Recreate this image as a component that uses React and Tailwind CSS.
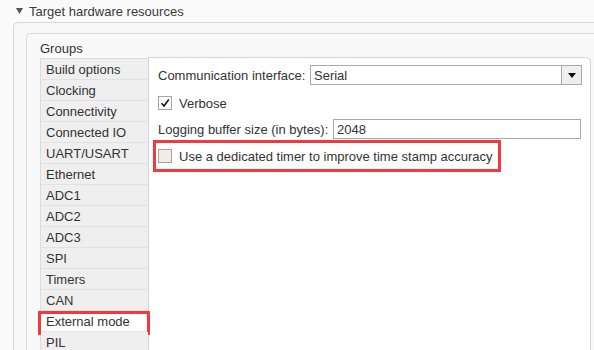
import React from 'react';

const groups = [
  'Build options',
  'Clocking',
  'Connectivity',
  'Connected IO',
  'UART/USART',
  'Ethernet',
  'ADC1',
  'ADC2',
  'ADC3',
  'SPI',
  'Timers',
  'CAN',
  'External mode',
  'PIL',
];

const Checkbox = ({ checked, tint }) => (
  <div
    className={`w-[14px] h-[14px] shrink-0 border border-[#a3a3a3] flex items-center justify-center ${
      tint ? 'bg-[#f1ece4]' : 'bg-white'
    }`}
  >
    {checked && (
      <svg width="10" height="10" viewBox="0 0 10 10">
        <path d="M1.5 5.2 L4 8 L8.8 1.5" fill="none" stroke="#111" strokeWidth="1.6" />
      </svg>
    )}
  </div>
);

const App = () => {
  return (
    <div className="w-[594px] h-[350px] overflow-hidden bg-[#fafafa] text-[#333] font-['Liberation_Sans',Arial,sans-serif] text-[13px] leading-none">
      {/* Section header */}
      <div className="h-[22px] flex items-center pl-[16px] gap-[6px]">
        <svg width="7" height="6" viewBox="0 0 7 6">
          <path d="M0 0 H7 L3.5 6 Z" fill="#555" />
        </svg>
        <span className="text-[13px] text-[#3a3a3a]">Target hardware resources</span>
      </div>

      {/* Outer panel */}
      <div className="ml-[13px] w-[640px] h-[400px] border-l border-t border-[#d8d8d8] rounded-tl-[5px] bg-[#f8f8f8] pt-[10px] pl-[12px]">
        {/* Inner panel */}
        <div className="h-[400px] border-l border-t border-[#dadada] rounded-tl-[5px] bg-[#f9f9f9] pl-[13px]">
          <div className="h-[24px] pt-[8px]">Groups</div>

          <div className="flex">
            {/* Group list */}
            <div className="w-[108px] shrink-0 border-l border-t border-[#dcdcdc]">
              {groups.map((g) => (
                <div
                  key={g}
                  className={`relative h-[21px] border-b border-[#e2e2e2] pl-[5px] flex items-center ${
                    g === 'External mode' ? 'bg-white' : 'bg-[#efefef]'
                  }`}
                >
                  {g}
                  {g === 'External mode' && (
                    <div className="absolute -left-[3px] top-[0px] w-[112px] h-[24px] border-[3px] border-[#f2393d]" />
                  )}
                </div>
              ))}
            </div>

            {/* Settings panel */}
            <div className="-mt-[1px] w-[443px] h-[320px] shrink-0 bg-white border-l border-t border-r border-[#d6d6d6] rounded-tr-[5px] pl-[9px] pt-[7px]">
              <div className="flex items-center h-[20px]">
                <span className="w-[152px] shrink-0">Communication interface:</span>
                <div className="w-[272px] h-[20px] border border-[#a9a9a9] flex">
                  <div className="flex-1 flex items-center pl-[3px]">Serial</div>
                  <div className="w-[20px] border-l border-[#a9a9a9] bg-[#efefef] flex items-center justify-center">
                    <svg width="8" height="5" viewBox="0 0 8 5">
                      <path d="M0 0 H8 L4 5 Z" fill="#111" />
                    </svg>
                  </div>
                </div>
              </div>

              <div className="flex items-center gap-[7px] mt-[11px] h-[14px]">
                <Checkbox checked />
                <span>Verbose</span>
              </div>

              <div className="flex items-center h-[20px] mt-[9px]">
                <span className="w-[175px] shrink-0">Logging buffer size (in bytes):</span>
                <div className="w-[248px] h-[20px] border border-[#a9a9a9] flex items-center pl-[3px]">2048</div>
              </div>

              <div className="-ml-[5px] mt-[1px] w-[348px] h-[32px] border-[3px] border-[#f2393d] flex items-center gap-[7px] pl-[2px]">
                <Checkbox tint />
                <span>Use a dedicated timer to improve time stamp accuracy</span>
              </div>
            </div>
          </div>
        </div>
      </div>
    </div>
  );
};

export default App;
